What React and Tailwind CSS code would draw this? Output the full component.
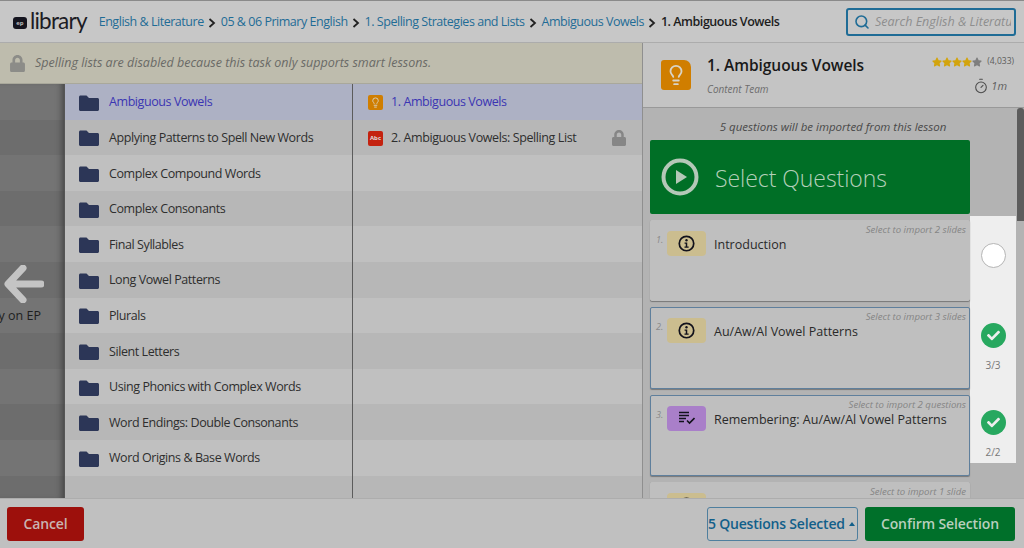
import React from "react";
import { Lightbulb, Timer, Search } from "lucide-react";
import { FaLock, FaCheck, FaStar } from "react-icons/fa";

const F = { fontFamily: '"Open Sans", sans-serif' };

const folders = ["Ambiguous Vowels","Applying Patterns to Spell New Words","Complex Compound Words","Complex Consonants","Final Syllables","Long Vowel Patterns","Plurals","Silent Letters","Using Phonics with Complex Words","Word Endings: Double Consonants","Word Origins & Base Words",""];

function FolderIcon() {
  return (
    <svg width="20" height="16" viewBox="0 0 20 16" className="shrink-0">
      <path d="M1.5 0.5H7.5L10 3H18.5C19.3 3 20 3.7 20 4.5V14.5C20 15.3 19.3 16 18.5 16H1.5C0.7 16 0 15.3 0 14.5V2C0 1.2 0.7 0.5 1.5 0.5Z" fill="#2c3657" />
    </svg>
  );
}

function Sep() {
  return (
    <svg width="8" height="10" viewBox="0 0 8 10" className="shrink-0 mx-[4.5px]">
      <path d="M1.5 1L6 5L1.5 9" fill="none" stroke="#222" strokeWidth="1.8" />
    </svg>
  );
}

function LessonIcon({ small }) {
  return (
    <div className={small ? "w-[15px] h-[15px] rounded-[2px] bg-[#d07e00] flex items-center justify-center shrink-0" : "w-[30px] h-[30px] rounded-[3px] rounded-tr-[7px] bg-[#d07e00] flex items-center justify-center shrink-0"}>
      <Lightbulb size={small ? 11 : 22} color="#d9d4c6" strokeWidth={2} />
    </div>
  );
}

function InfoGlyph() {
  return (
    <svg width="17" height="17" viewBox="0 0 16 16">
      <circle cx="8" cy="8" r="6.8" fill="none" stroke="#12121c" strokeWidth="1.6" />
      <circle cx="8" cy="4.9" r="1.1" fill="#12121c" />
      <path d="M6.2 7.1H8.7V10.8H10V12H6.1V10.8H7.3V8.3H6.2Z" fill="#12121c" />
    </svg>
  );
}

function ListGlyph() {
  return (
    <svg width="16" height="14" viewBox="0 0 16 14">
      <path d="M0 1.5H10M0 4.5H10M0 7.5H7M0 10.5H5" stroke="#12121c" strokeWidth="1.3" fill="none" />
      <path d="M8 9.5L10.5 12L15.5 7" stroke="#12121c" strokeWidth="1.6" fill="none" />
    </svg>
  );
}

function Card({ n, label, hint, selected, purple, glyph }) {
  return (
    <div className={selected ? "relative h-[81.4px] shrink-0 rounded-[2px] bg-[#bfbfbf] border border-[#5f7f9c] shadow-[0_1px_1px_#777]" : "relative h-[81.4px] shrink-0 rounded-[2px] bg-[#bfbfbf] border border-[#bfbfbf] shadow-[0_1px_1px_#777]"}>
      <div className="absolute right-[3px] top-[2px] text-[9.6px] italic text-[#858585] leading-[14px] whitespace-nowrap">{hint}</div>
      <div className="flex items-start pt-[10px] pl-[5px]">
        <span className="w-[11px] text-[9px] italic text-[#8a8a8a] leading-[16px] pt-[1px]">{n}</span>
        <div className={purple ? "w-[39px] h-[25px] rounded-[4px] bg-[#a97fc9] flex items-center justify-center" : "w-[39px] h-[25px] rounded-[4px] bg-[#cbbd8f] flex items-center justify-center"}>{glyph}</div>
        <span className="ml-[8px] text-[12.5px] text-[#2a2a2a] leading-[24px] pt-[2px] whitespace-nowrap">{label}</span>
      </div>
    </div>
  );
}

function Check({ count }) {
  return (
    <div className="h-[87.4px] flex flex-col items-center pt-[18px]">
      <div className="w-[25px] h-[25px] rounded-full bg-[#27a85f] flex items-center justify-center">
        <FaCheck size={13} color="#eeeeee" />
      </div>
      <span className="mt-[10px] text-[10px] text-[#777] leading-[14px]">{count}</span>
    </div>
  );
}

export default function App() {
  return (
    <div style={F} className="w-[1024px] h-[548px] overflow-hidden flex flex-col bg-[#c0c0c0]">
      <header className="h-[43px] shrink-0 flex items-center bg-[#c7c7c7] border-t border-t-[#8a8a8a] border-b border-b-[#acacac]">
        <div className="ml-[13px] mt-[2px] w-[14px] h-[12px] rounded-[3px] bg-[#15151f] text-[6px] leading-[12px] text-center font-bold text-[#bbb]">ep</div>
        <span className="ml-[3px] text-[22.5px] leading-none text-[#1c1c24] tracking-[-0.8px] -mt-[1px]" style={{ fontFamily: '"Lato", sans-serif', fontWeight: 400 }}>library</span>
        <nav className="ml-[12px] pt-[2px] flex items-center text-[12.5px] tracking-[-0.47px] text-[#1f6c96] whitespace-nowrap">
          <span>English &amp; Literature</span><Sep />
          <span>05 &amp; 06 Primary English</span><Sep />
          <span>1. Spelling Strategies and Lists</span><Sep />
          <span>Ambiguous Vowels</span><Sep />
          <span className="text-[#1d1d1d] font-semibold">1. Ambiguous Vowels</span>
        </nav>
        <div className="ml-auto mr-[8px] w-[170px] h-[28px] mt-[1px] border-2 border-[#1f6c96] rounded-[3px] flex items-center pl-[6px] pr-[3px] shrink-0">
          <Search size={16} color="#1f6c96" strokeWidth={2.4} className="shrink-0" />
          <div className="ml-[5px] pt-[1px] flex-1 overflow-hidden">
            <span className="block text-[12.5px] italic text-[#8e8e8e] whitespace-nowrap">Search English &amp; Literature</span>
          </div>
        </div>
      </header>

      <div className="flex-1 flex min-h-0">
        <div className="w-[642px] shrink-0 flex flex-col min-h-0">
          <div className="h-[41px] shrink-0 bg-[#bebcad] border-b border-[#a9a89b] flex items-center pl-[9px]">
            <FaLock size={17} color="#8c8c88" />
            <span className="ml-[9px] pt-[1px] text-[12.5px] italic text-[#6a6a66]">Spelling lists are disabled because this task only supports smart lessons.</span>
          </div>
          <div className="flex-1 flex min-h-0 relative overflow-hidden">
            <div className="w-[65px] shrink-0 border-r border-[#555] relative flex flex-col">
              {folders.map((_, i) => (
                <div key={i} className={i % 2 ? "h-[35.6px] shrink-0 bg-[#6d6d6d]" : "h-[35.6px] shrink-0 bg-[#747474]"} />
              ))}
              <div className="absolute inset-0 shadow-[inset_-6px_0_6px_-4px_#444]" />
            </div>
            <div className="absolute left-0 top-[178px] w-[63px] h-[70px] overflow-hidden flex flex-col items-end">
              <svg width="40" height="38" viewBox="0 0 40 38" className="mr-[19px] mt-[3px]">
                <path d="M19 3L4 19L19 35M5 19H37" fill="none" stroke="#c4c4c4" strokeWidth="7" strokeLinecap="round" strokeLinejoin="round" />
              </svg>
              <span className="mt-[4px] mr-[22px] text-[12.5px] text-[#1f1f1f] whitespace-nowrap">y on EP</span>
            </div>
            <div className="w-[288px] shrink-0 border-r border-[#5c5c5c] flex flex-col">
              {folders.map((f, i) => (
                <div key={i} className={i === 0 ? "h-[35.6px] shrink-0 flex items-center pl-[14px] pt-[2px] bg-[#adb1c4]" : i % 2 ? "h-[35.6px] shrink-0 flex items-center pl-[14px] pt-[2px] bg-[#b7b7b7]" : "h-[35.6px] shrink-0 flex items-center pl-[14px] pt-[2px] bg-[#c0c0c0]"}>
                  {f && <FolderIcon />}
                  {f && <span className={i === 0 ? "ml-[10px] text-[12.5px] tracking-[-0.42px] text-[#3b35b3] whitespace-nowrap" : "ml-[10px] text-[12.5px] tracking-[-0.42px] text-[#2e2e2e] whitespace-nowrap"}>{f}</span>}
                </div>
              ))}
            </div>
            <div className="flex-1 flex flex-col">
              {folders.map((_, i) => (
                <div key={i} className={i === 0 ? "h-[35.6px] shrink-0 flex items-center pl-[15px] pr-[15px] pt-[2px] bg-[#adb1c4]" : i % 2 ? "h-[35.6px] shrink-0 flex items-center pl-[15px] pr-[15px] pt-[2px] bg-[#b7b7b7]" : "h-[35.6px] shrink-0 flex items-center pl-[15px] pr-[15px] pt-[2px] bg-[#c0c0c0]"}>
                  {i === 0 && <><LessonIcon small /><span className="ml-[8px] text-[12.5px] tracking-[-0.42px] text-[#3b35b3]">1. Ambiguous Vowels</span></>}
                  {i === 1 && <>
                    <div className="w-[15px] h-[15px] rounded-[2px] bg-[#c4220f] text-[6px] font-bold text-[#ddd] text-center leading-[15px]">Abc</div>
                    <span className="ml-[8px] text-[12.5px] tracking-[-0.4px] text-[#2e2e2e]">2. Ambiguous Vowels: Spelling List</span>
                    <FaLock size={16} color="#868686" className="ml-auto" />
                  </>}
                </div>
              ))}
            </div>
          </div>
        </div>

        <aside className="flex-1 flex flex-col min-h-0 bg-[#b3b3b3] border-l border-[#8f8f8f] relative">
          <div className="h-[65px] shrink-0 bg-[#c4c4c4] border-b border-[#999] flex items-center pl-[18px] pr-[10px]">
            <LessonIcon />
            <div className="ml-[16px] flex-1">
              <div className="text-[15.5px] font-semibold text-[#191919] leading-[20px] tracking-[-0.05px]">1. Ambiguous Vowels</div>
              <div className="mt-[7px] text-[10px] italic text-[#6d6d6d] leading-[14px]">Content Team</div>
            </div>
            <div className="flex flex-col items-end">
              <div className="flex items-center">
                {[0, 1, 2, 3, 4].map((s) => <FaStar key={s} size={10} color={s < 4 ? "#d2a40e" : "#7e7e7e"} />)}
                <span className="ml-[5px] text-[8.5px] text-[#5c5c5c]">(4,033)</span>
              </div>
              <div className="mt-[10px] mr-[7px] flex items-center">
                <Timer size={16} color="#4c4c4c" strokeWidth={1.6} />
                <span className="ml-[2px] text-[11px] italic text-[#5f5f5f]">1m</span>
              </div>
            </div>
          </div>
          <div className="flex-1 min-h-0 overflow-hidden relative">
            <div className="absolute right-0 top-0 h-[113px] w-[7px] bg-[#5c5c5c] rounded-t-[3px]" />
            <div className="w-[366px] ml-[7px] h-[32px] pt-[6px] flex items-center justify-center text-[11.5px] italic text-[#4a4a4a] whitespace-nowrap">5 questions will be imported from this lesson</div>
            <div className="ml-[7px] w-[320px] h-[74px] rounded-[2px] bg-[#006f26] flex items-center pl-[11px]">
              <svg width="38" height="38" viewBox="0 0 38 38">
                <circle cx="19" cy="19" r="16.5" fill="none" stroke="#b4c8b8" strokeWidth="4" />
                <path d="M15 12L26 19L15 26Z" fill="#b4c8b8" />
              </svg>
              <span className="ml-[16px] pt-[2px] text-[23px] font-light tracking-[-0.05px] text-[#b4d0ba] whitespace-nowrap">Select Questions</span>
            </div>
            <div className="flex items-start mt-[2px]">
              <div className="ml-[7px] w-[320px] flex flex-col gap-[6px] pt-[4px]">
                <Card n="1." label="Introduction" hint="Select to import 2 slides" glyph={<InfoGlyph />} />
                <Card n="2." label="Au/Aw/Al Vowel Patterns" hint="Select to import 3 slides" selected glyph={<InfoGlyph />} />
                <Card n="3." label="Remembering: Au/Aw/Al Vowel Patterns" hint="Select to import 2 questions" selected purple glyph={<ListGlyph />} />
                <Card n="4." label="" hint="Select to import 1 slide" glyph={<InfoGlyph />} />
              </div>
              <div className="w-[46px] h-[247px] bg-[#eeeeee] pt-[2px]">
                <div className="h-[87px] flex justify-center pt-[25px]">
                  <div className="w-[25px] h-[25px] rounded-full bg-white border border-[#b5b5b5]" />
                </div>
                <Check count="3/3" />
                <Check count="2/2" />
              </div>
            </div>
          </div>
        </aside>
      </div>

      <footer className="h-[50px] shrink-0 bg-[#c0c0c0] border-t border-[#adadad] flex items-center pl-[7px] pr-[9px]">
        <button className="w-[77px] h-[34px] rounded-[3px] bg-[#9d100c] text-[14px] font-semibold tracking-[-0.1px] text-[#c9b4b2]">Cancel</button>
        <button className="ml-auto w-[151px] h-[34px] rounded-[3px] border border-[#4f7f9e] text-[14px] font-semibold tracking-[-0.2px] text-[#125f8a] whitespace-nowrap flex items-center justify-start gap-[4px]">
          5 Questions Selected
          <svg width="6" height="4" viewBox="0 0 6 4"><path d="M3 0L6 4H0Z" fill="#125f8a" /></svg>
        </button>
        <button className="ml-[7px] w-[150px] h-[34px] rounded-[3px] bg-[#00702a] text-[14px] font-semibold tracking-[-0.1px] text-[#b8cfbd]">Confirm Selection</button>
      </footer>
    </div>
  );
}
